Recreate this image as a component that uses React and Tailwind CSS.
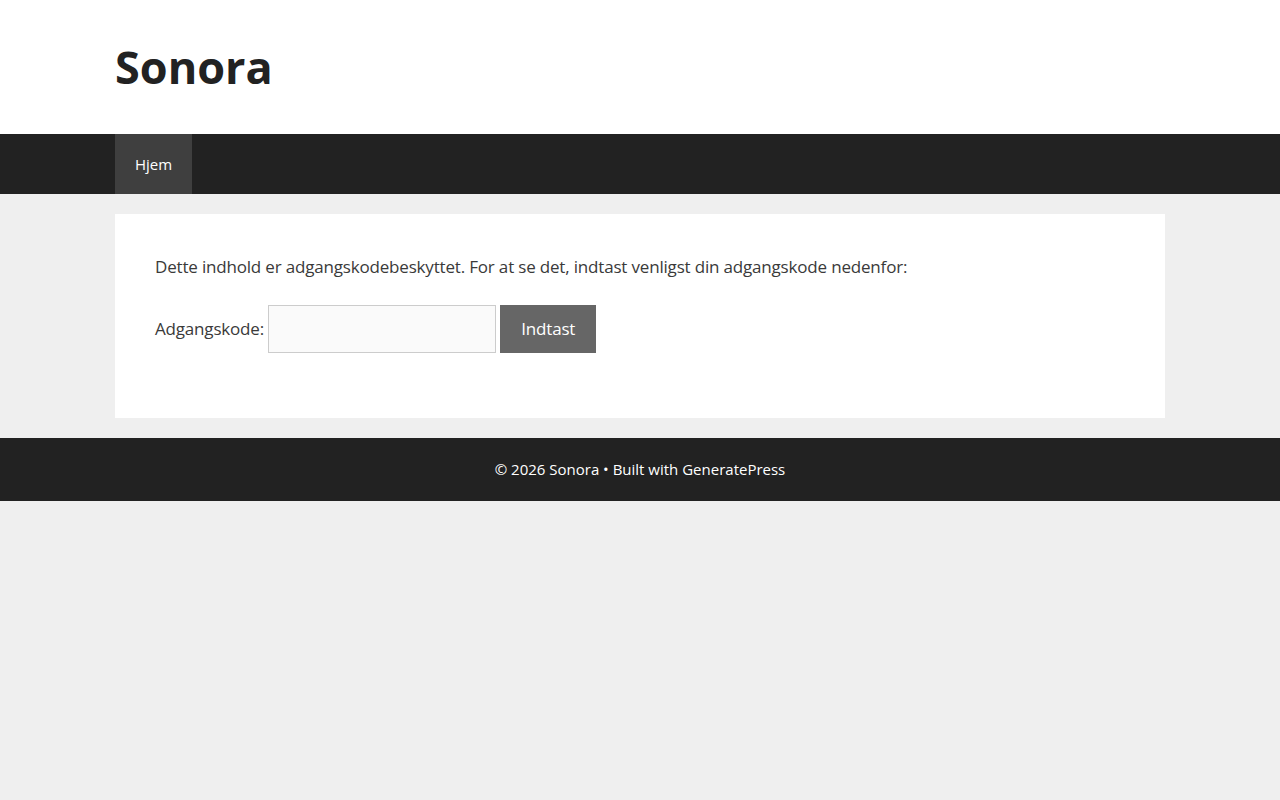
export default function App() {
  return (
    <div className="min-h-[800px] bg-[#efefef] font-['Open_Sans',sans-serif] text-[17px] leading-[1.5] text-[#3a3a3a]">
      {/* Header */}
      <header className="bg-white">
        <div className="mx-auto w-[1050px] py-10">
          <p className="text-[45px] font-bold leading-[1.2] text-[#222222]">Sonora</p>
        </div>
      </header>

      {/* Navigation */}
      <nav className="bg-[#222222]">
        <div className="mx-auto flex w-[1050px]">
          <a className="bg-[#3f3f3f] px-5 text-[15px] leading-[60px] text-white">Hjem</a>
        </div>
      </nav>

      {/* Indhold */}
      <main className="mx-auto mt-5 w-[1050px] bg-white p-10 tracking-[-0.18px]">
        <p className="mb-[25.5px]">
          Dette indhold er adgangskodebeskyttet. For at se det, indtast venligst din adgangskode nedenfor:
        </p>
        <form className="mb-[25px] flex items-center" onSubmit={(e) => e.preventDefault()}>
          <label className="flex items-center">
            Adgangskode:&nbsp;
            <input
              type="password"
              className="box-border h-12 w-[228px] border border-[#cccccc] bg-[#fafafa] px-[15px] py-[10px] text-[#666666] outline-none"
            />
          </label>
          <button className="ml-1 box-border h-12 w-24 bg-[#666666] text-[17px] text-white">Indtast</button>
        </form>
      </main>

      {/* Footer */}
      <footer className="mt-5 bg-[#222222] py-5 text-center text-[15px] leading-[1.5] text-white">
        <span>© 2026 Sonora • Built with GeneratePress</span>
      </footer>
    </div>
  );
}
